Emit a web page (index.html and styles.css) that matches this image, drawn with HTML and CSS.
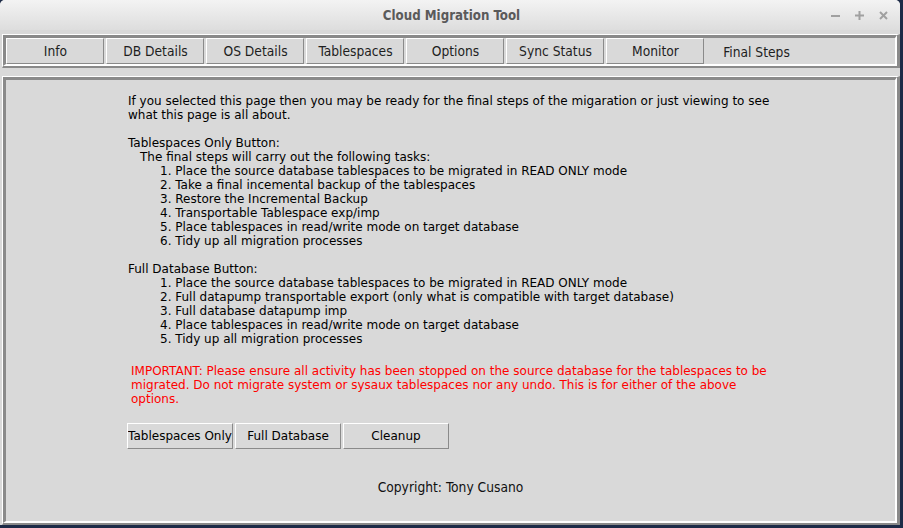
FILE: index.html
```html
<!DOCTYPE html>
<html>
<head>
<meta charset="utf-8">
<title>Cloud Migration Tool</title>
<link rel="stylesheet" href="styles.css">
</head>
<body>
<div class="window">
  <div class="titlebar">
    <span></span>
    <span class="title">Cloud Migration Tool</span>
    <div class="controls">
      <svg width="9" height="9" viewBox="0 0 9 9"><line x1="0" y1="5" x2="9" y2="5" stroke="#a0a0a0" stroke-width="2"/></svg>
      <svg width="9" height="9" viewBox="0 0 9 9"><line x1="0" y1="4.5" x2="9" y2="4.5" stroke="#a0a0a0" stroke-width="2"/><line x1="4.5" y1="0" x2="4.5" y2="9" stroke="#a0a0a0" stroke-width="2"/></svg>
      <svg width="9" height="9" viewBox="0 0 9 9"><line x1="1" y1="1" x2="8" y2="8" stroke="#a0a0a0" stroke-width="2"/><line x1="8" y1="1" x2="1" y2="8" stroke="#a0a0a0" stroke-width="2"/></svg>
    </div>
  </div>

  <div class="frame tabframe">
    <div class="frame-inner tabs">
      <div class="tab">Info</div>
      <div class="tab">DB Details</div>
      <div class="tab">OS Details</div>
      <div class="tab">Tablespaces</div>
      <div class="tab">Options</div>
      <div class="tab">Sync Status</div>
      <div class="tab">Monitor</div>
      <div class="tab selected">Final Steps</div>
    </div>
  </div>

  <div class="frame mainframe">
    <div class="frame-inner main">
      <div class="intro">
        <div>If you selected this page then you may be ready for the final steps of the migaration or just viewing to see</div>
        <div>what this page is all about.</div>
        <div class="blank"></div>
        <div>Tablespaces Only Button:</div>
        <div class="sub">The final steps will carry out the following tasks:</div>
        <div class="item">1. Place the source database tablespaces to be migrated in READ ONLY mode</div>
        <div class="item">2. Take a final incemental backup of the tablespaces</div>
        <div class="item">3. Restore the Incremental Backup</div>
        <div class="item">4. Transportable Tablespace exp/imp</div>
        <div class="item">5. Place tablespaces in read/write mode on target database</div>
        <div class="item">6. Tidy up all migration processes</div>
        <div class="blank"></div>
        <div>Full Database Button:</div>
        <div class="item">1. Place the source database tablespaces to be migrated in READ ONLY mode</div>
        <div class="item">2. Full datapump transportable export (only what is compatible with target database)</div>
        <div class="item">3. Full database datapump imp</div>
        <div class="item">4. Place tablespaces in read/write mode on target database</div>
        <div class="item">5. Tidy up all migration processes</div>
      </div>
      <div class="warning">
        <div>IMPORTANT: Please ensure all activity has been stopped on the source database for the tablespaces to be</div>
        <div>migrated. Do not migrate system or sysaux tablespaces nor any undo. This is for either of the above</div>
        <div>options.</div>
      </div>
      <div class="actions">
        <button class="btn">Tablespaces Only</button>
        <button class="btn">Full Database</button>
        <button class="btn">Cleanup</button>
      </div>
      <div class="copyright">Copyright: Tony Cusano</div>
    </div>
  </div>
</div>
</body>
</html>
```
FILE: styles.css
```css
html, body {
  margin: 0;
  padding: 0;
  background: #1d2b47;
  width: 903px;
  height: 528px;
  overflow: hidden;
}

.window {
  width: 900px;
  height: 525px;
  background: #d9d9d9;
  border-radius: 5px 5px 0 0;
  display: flex;
  flex-direction: column;
  overflow: hidden;
}

.titlebar {
  height: 30px;
  flex: none;
  background: linear-gradient(#f3f3f3, #dddddd);
  display: grid;
  grid-template-columns: 1fr auto 1fr;
  align-items: center;
}

.title {
  font-family: "DejaVu Sans Condensed", "DejaVu Sans", sans-serif;
  font-weight: bold;
  font-size: 13.2px;
  color: #5a5a5a;
  padding-left: 3px;
}

.controls {
  justify-self: end;
  display: flex;
  gap: 15px;
  padding-right: 12px;
  padding-top: 1px;
}

.controls svg {
  display: block;
}

.frame {
  flex: none;
  margin-left: 2px;
  border-style: solid;
  border-width: 1px 3px 2px 1px;
  border-color: #ffffff #8a8a8a #8a8a8a #ffffff;
}

.frame-inner {
  border-style: solid;
  border-width: 3px 2px 2px 3px;
  border-color: #8a8a8a #ffffff #ffffff #8a8a8a;
}

.tabframe {
  margin-top: 4px;
}

.tabs {
  display: flex;
  gap: 2px;
  height: 26px;
}

.tab {
  width: 98px;
  box-sizing: border-box;
  height: 26px;
  border-style: solid;
  border-width: 1px;
  border-color: #ffffff #8a8a8a #8a8a8a #ffffff;
  font-family: "DejaVu Sans Condensed", "DejaVu Sans", sans-serif;
  font-size: 13.7px;
  color: #1e1e1e;
  display: flex;
  align-items: center;
  justify-content: center;
  padding-bottom: 1px;
  padding-left: 1px;
}

.tab.selected {
  border-color: transparent;
  padding-top: 2px;
  padding-left: 3px;
}

.mainframe {
  margin-top: 8px;
  flex: 1;
  display: flex;
  flex-direction: column;
}

.main {
  flex: 1;
  font-family: "DejaVu Sans", sans-serif;
  font-size: 12px;
  line-height: 14px;
  color: #000;
}

.intro {
  padding: 14px 0 0 122px;
}

.blank {
  height: 14px;
}

.sub {
  padding-left: 12px;
}

.item {
  padding-left: 32px;
}

.warning {
  color: #ff0000;
  padding-left: 125px;
  margin-top: 18px;
}

.actions {
  display: flex;
  gap: 2px;
  padding-left: 121px;
  margin-top: 17px;
}

.btn {
  width: 106px;
  height: 26px;
  box-sizing: border-box;
  margin: 0;
  padding: 0;
  background: #d9d9d9;
  border-style: solid;
  border-width: 1px;
  border-color: #ffffff #8a8a8a #8a8a8a #ffffff;
  font-family: "DejaVu Sans", sans-serif;
  font-size: 12px;
  color: #000;
  white-space: nowrap;
  overflow: hidden;
}

.copyright {
  margin-top: 30px;
  text-align: center;
  font-family: "DejaVu Sans Condensed", "DejaVu Sans", sans-serif;
  font-size: 13.7px;
  line-height: 16px;
  color: #111;
}
```
